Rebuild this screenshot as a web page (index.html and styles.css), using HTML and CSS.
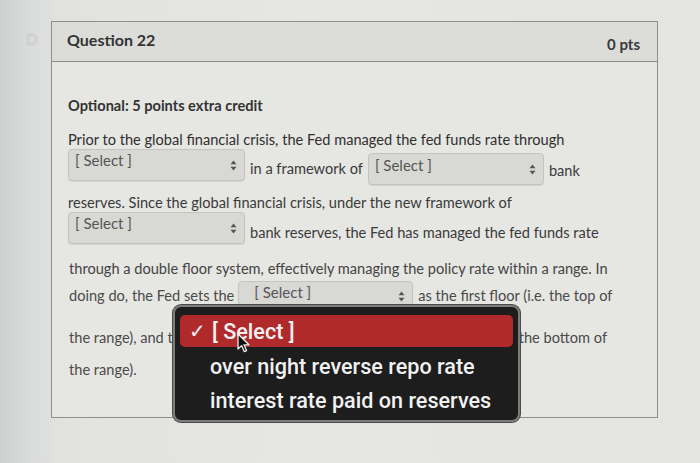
FILE: index.html
```html
<!DOCTYPE html>
<html>
<head>
<meta charset="utf-8">
<link rel="stylesheet" href="styles.css">
</head>
<body>
<div class="page">
  <div class="gutter"><span class="ghost">D</span></div>
  <div class="card">
    <div class="card-head">
      <span class="q-title">Question 22</span>
      <span class="q-pts">0 pts</span>
    </div>
    <div class="card-body">
      <div class="row r-opt"><span class="strong">Optional: 5 points extra credit</span></div>
      <div class="row r-prior">Prior to the global financial crisis, the Fed managed the fed funds rate through</div>
      <div class="row r-sel1">
        <span class="sel"><span class="sel-text">[ Select ]</span><svg class="arr" width="7" height="11" viewBox="0 0 7 11"><path d="M3.5 0.5 L6.5 4.3 H0.5 Z M3.5 10.5 L6.5 6.7 H0.5 Z" fill="#555"/></svg></span>
        <span class="txt">in a framework of</span>
        <span class="sel sel2"><span class="sel-text">[ Select ]</span><svg class="arr" width="7" height="11" viewBox="0 0 7 11"><path d="M3.5 0.5 L6.5 4.3 H0.5 Z M3.5 10.5 L6.5 6.7 H0.5 Z" fill="#555"/></svg></span>
        <span class="txt t-bank">bank</span>
      </div>
      <div class="row r-res">reserves. Since the global financial crisis, under the new framework of</div>
      <div class="row r-sel3">
        <span class="sel"><span class="sel-text">[ Select ]</span><svg class="arr" width="7" height="11" viewBox="0 0 7 11"><path d="M3.5 0.5 L6.5 4.3 H0.5 Z M3.5 10.5 L6.5 6.7 H0.5 Z" fill="#555"/></svg></span>
        <span class="txt">bank reserves, the Fed has managed the fed funds rate</span>
      </div>
      <div class="row r-thru">through a double floor system, effectively managing the policy rate within a range. In</div>
      <div class="row r-doing">
        <span class="txt first">doing do, the Fed sets the</span>
        <span class="sel sel4"><span class="sel-text">[ Select ]</span><svg class="arr" width="7" height="11" viewBox="0 0 7 11"><path d="M3.5 0.5 L6.5 4.3 H0.5 Z M3.5 10.5 L6.5 6.7 H0.5 Z" fill="#555"/></svg></span>
        <span class="txt">as the first floor (i.e. the top of</span>
      </div>
      <div class="row r-range">
        <span class="txt first">the range), and t</span>
        <span class="gap"></span>
        <span class="txt">the bottom of</span>
      </div>
      <div class="row r-range2">the range).</div>
    </div>
  </div>
</div>
<div class="menu">
  <div class="opt opt-on"><span class="check">✓</span><span>[ Select ]</span></div>
  <div class="opt"><span>over night reverse repo rate</span></div>
  <div class="opt"><span>interest rate paid on reserves</span></div>
  <svg class="cursor" width="14" height="21" viewBox="0 0 14 21"><path d="M1 1 L1 16 L4.6 12.6 L7.2 18.6 L9.6 17.6 L7 11.8 L12 11.8 Z" fill="#111" stroke="#eee" stroke-width="1.3" stroke-linejoin="round"/></svg>
</div>
</body>
</html>
```
FILE: styles.css
```css
html, body {
  margin: 0;
  padding: 0;
}
body {
  width: 700px;
  height: 463px;
  overflow: hidden;
  position: relative;
  background: linear-gradient(90deg, #cdd1d1 0px, #d9dcdb 30px, #e2e2df 60px, #e6e6e3 300px, #e4e4e1 700px);
  font-family: Lato, "Open Sans", sans-serif;
  color: #3a3a3a;
}
.page {
  display: flex;
  padding-top: 21px;
}
.gutter {
  width: 51px;
  flex: none;
  position: relative;
}
.ghost {
  display: block;
  margin: 9px 0 0 26px;
  font-size: 15px;
  font-weight: 400;
  color: transparent;
  -webkit-text-stroke: 1px #cfcfcc;
}
.card {
  width: 607px;
  height: 397px;
  border: 1px solid #8e8e8b;
  background: #e6e6e3;
  box-sizing: border-box;
}
.card-head {
  height: 40px;
  background: #dcdcd9;
  border-bottom: 1px solid #8e8e8b;
  display: flex;
  align-items: center;
  justify-content: space-between;
  padding: 0 17px 0 15px;
  box-sizing: border-box;
}
.q-title {
  font-size: 16px;
  font-weight: 700;
  color: #333;
  margin-top: -4px;
}
.q-pts {
  font-size: 15px;
  font-weight: 700;
  color: #383838;
  margin-top: 4px;
}
.card-body {
  display: flex;
  flex-direction: column;
  padding: 35px 0 0 16px;
  font-size: 14.6px;
}
.row {
  display: flex;
  align-items: center;
  white-space: nowrap;
  line-height: 18px;
}
.strong {
  font-weight: 700;
  color: #333;
  font-size: 14.6px;
}
.r-prior { margin-top: 16px; color: #2f2f2f; }
.r-sel1 { height: 36px; align-items: flex-start; }
.r-sel1 .txt { margin-top: 11px; }
.r-sel1 .t-bank { margin-top: 13px; }
.r-res { margin-top: 9px; }
.r-sel3 { height: 34px; margin-top: 0; align-items: flex-start; }
.r-sel3 .txt { margin-top: 12px; }
.r-thru { margin-top: 14px; color: #444; padding-left: 1px; }
.r-doing { margin-top: 3px; height: 30px; align-items: flex-start; color: #4a4a4a; }
.r-doing .txt { margin-top: 6px; }
.r-range { margin-top: 18px; color: #4a4a4a; }
.r-range .gap { width: 337px; }
.r-range2 { margin-top: 14px; color: #4a4a4a; padding-left: 1px; }
.txt { padding: 0 5px; }
.txt.first { padding-left: 1px; padding-right: 4px; }
.sel {
  width: 177px;
  height: 32px;
  box-sizing: border-box;
  border: 1px solid #c3c3c0;
  border-radius: 4px;
  background: #d8d8d5;
  display: flex;
  align-items: center;
  justify-content: space-between;
  padding: 0 7px 2px 6px;
  box-shadow: 0 1px 1px rgba(0,0,0,0.08);
}
.sel2 { margin-top: 4px; width: 176px; }
.sel4 { height: 30px; width: 175px; }
.sel4 .sel-text { margin-left: 9px; margin-top: -6px; }
.sel-text {
  font-size: 15px;
  color: #555;
  margin-top: -8px;
}
.sel2 .sel-text { margin-top: -6px; }
.arr { margin-top: 2px; }
.menu {
  position: absolute;
  left: 173px;
  top: 305px;
  width: 347px;
  height: 117px;
  box-sizing: border-box;
  background: #1d1d1d;
  border: 2px solid #7d7d7b;
  border-radius: 8px;
  padding: 8px 5px 0 5px;
  display: flex;
  flex-direction: column;
  font-family: Roboto, "Liberation Sans", Arial, sans-serif;
  font-weight: 500;
  font-size: 21.6px;
  color: #f1f1f1;
  box-shadow: 0 0 0 1px #4a4a4a;
}
.opt {
  height: 34px;
  display: flex;
  align-items: center;
  padding-left: 30px;
  border-radius: 5px;
}
.opt-on {
  background: #b02a2b;
  height: 32px;
  padding-left: 9px;
  margin-bottom: 2px;
}
.check {
  width: 23px;
  font-size: 20px;
}
.cursor {
  position: absolute;
  left: 62px;
  top: 26px;
}
```
